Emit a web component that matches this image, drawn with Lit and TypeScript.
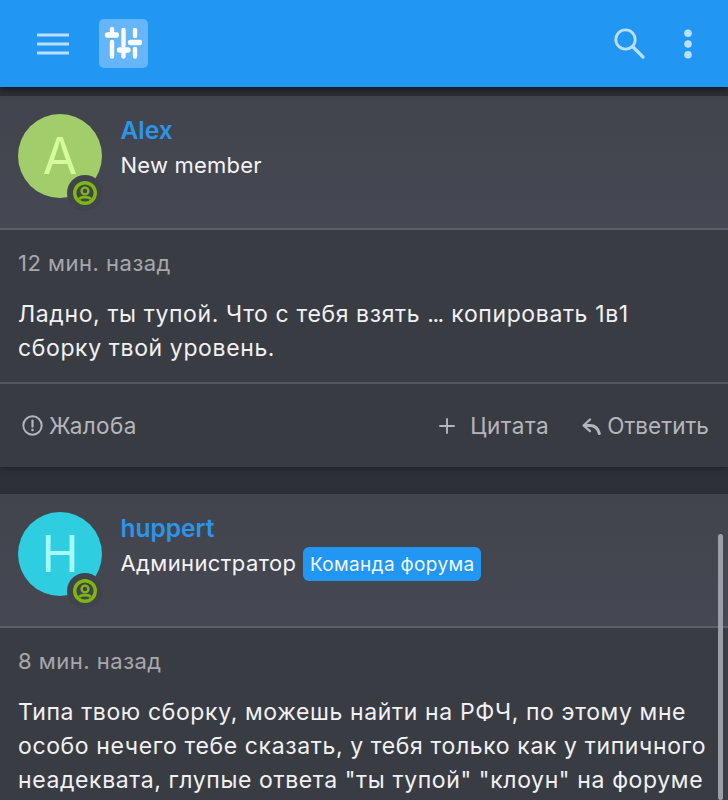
import { LitElement, html, css, svg } from "lit";
import { customElement } from "lit/decorators.js";

const statusIcon = svg`<svg viewBox="0 0 24 24" width="24" height="24" aria-hidden="true">
  <circle cx="12" cy="12" r="10.300" fill="none" stroke="#7fb60f" stroke-width="3.400"/>
  <circle cx="12" cy="10" r="3.400" fill="none" stroke="#7fb60f" stroke-width="2.400"/>
  <path d="M6.200 18c2-2.600 9.600-2.600 11.600 0" fill="none" stroke="#7fb60f" stroke-width="2.800"/>
</svg>`;

@customElement("forum-post")
class ForumPost extends LitElement {
  static properties = {
    initial: {},
    name: {},
    role: {},
    badge: {},
    time: {},
    lines: { type: Array },
    bg: {},
    fg: {},
    actions: { type: Boolean },
    latinRole: { type: Boolean },
  };
  declare initial: string;
  declare name: string;
  declare role: string;
  declare badge: string;
  declare time: string;
  declare lines: unknown[];
  declare bg: string;
  declare fg: string;
  declare actions: boolean;
  declare latinRole: boolean;

  static styles = css`
    :host { display: block; font-family: Inter, "Noto Sans", sans-serif; }
    .card { background: #393b43; box-shadow: 0 2px 6px rgba(0,0,0,.28); }
    .head {
      display: flex; gap: 18.500px; height: 134px; box-sizing: border-box;
      padding: 18px 18px 0; background: linear-gradient(#42444d, #454852);
      border-bottom: 2px solid #5d5f68;
    }
    .avatar-wrap { position: relative; width: 84px; height: 84px; flex: none; }
    .avatar {
      width: 84px; height: 84px; border-radius: 50%;
      display: flex; align-items: center; justify-content: center;
      font-size: 50px; font-weight: 400; line-height: 1;
    }
    .status {
      position: absolute; left: 49px; top: 61px; width: 36px; height: 36px;
      border-radius: 50%; background: #42444d;
      display: flex; align-items: center; justify-content: center;
    }
    .name { color: #2b95ea; font-size: 24.500px; font-weight: 600; line-height: 30px; margin-top: 1px; }
    .role-row { display: flex; align-items: center; gap: 7px; margin-top: 3px; height: 34px; }
    .role { color: #f4f4f6; font-size: 22px; letter-spacing: .4px; }
    .role.latin { letter-spacing: .2px; }
    .badge {
      background: #2196f3; color: #f2f8fe; font-size: 19px; border-radius: 6px;
      height: 34px; padding: 0 6.500px; display: flex; align-items: center;
      letter-spacing: .35px; margin-top: 2px;
    }
    .body { padding: 20px 18px 0; background: #3a3c44; }
    .time { color: #a7a8ae; font-size: 22px; letter-spacing: .5px; line-height: 26px; }
    .text { color: #f1f1f3; font-size: 23px; letter-spacing: .62px; line-height: 34px; margin-top: 21px; padding-bottom: 17px; white-space: nowrap; }
    .dots { letter-spacing: -1.500px; margin-right: 1.500px; }
    .actions {
      display: flex; align-items: center; height: 85px; box-sizing: border-box;
      border-top: 2px solid #55575f; padding: 0 19px 0 21px;
      color: #b5b6bc; font-size: 22.500px; letter-spacing: .4px;
    }
    .act { display: flex; align-items: center; }
    .spacer { flex: 1; }
    .gap-alert { gap: 5px; }
    .gap-reply { gap: 6px; letter-spacing: .05px; }
    .gap-plus { gap: 15px; margin-right: 32px; letter-spacing: .55px; }
  `;

  render() {
    return html`<article class="card">
      <div class="head">
        <div class="avatar-wrap">
          <div class="avatar" style="background:${this.bg};color:${this.fg}">${this.initial}</div>
          <div class="status">${statusIcon}</div>
        </div>
        <div>
          <div class="name">${this.name}</div>
          <div class="role-row">
            <span class="role ${this.latinRole ? "latin" : ""}">${this.role}</span>
            ${this.badge ? html`<span class="badge">${this.badge}</span>` : ""}
          </div>
        </div>
      </div>
      <div class="body">
        <div class="time">${this.time}</div>
        <div class="text">${this.lines.map((l) => html`<div>${l}</div>`)}</div>
      </div>
      ${this.actions
        ? html`<div class="actions">
            <span class="act gap-alert">
              <svg width="23" height="23" viewBox="0 0 23 23" aria-hidden="true">
                <circle cx="11.500" cy="11.500" r="9.200" fill="none" stroke="#b5b6bc" stroke-width="1.900"/>
                <path d="M11.500 6.500v6.200" stroke="#b5b6bc" stroke-width="2.200" stroke-linecap="round"/>
                <circle cx="11.500" cy="16" r="1.300" fill="#b5b6bc"/>
              </svg>Жалоба</span>
            <span class="spacer"></span>
            <span class="act gap-plus">
              <svg width="16" height="16" viewBox="0 0 16 16" aria-hidden="true">
                <path d="M8 1v14M1 8h14" stroke="#b5b6bc" stroke-width="1.900" stroke-linecap="round"/>
              </svg>Цитата</span>
            <span class="act gap-reply">
              <svg width="20" height="18" viewBox="581 416 20 18" aria-hidden="true">
                <path d="M590 418.500 583.500 424.500 590 430.200" fill="none" stroke="#b5b6bc" stroke-width="2.200" stroke-linejoin="round" stroke-linecap="round"/>
                <path d="M585 424.500h5c4.500 0 8 3 9.300 8" fill="none" stroke="#b5b6bc" stroke-width="3" stroke-linecap="round"/>
              </svg>Ответить</span>
          </div>`
        : ""}
    </article>`;
  }
}

@customElement("app-root")
export class AppRoot extends LitElement {
  static styles = css`
    :host {
      display: block; position: relative; height: 800px; overflow: hidden;
      background: #2e3037; font-family: Inter, "Noto Sans", sans-serif;
    }
    .bar {
      height: 87px; background: #2196f3; display: flex; align-items: center;
      padding: 0 35px 0 37px; box-shadow: 0 3px 6px rgba(0,0,0,.5);
      position: relative; z-index: 1;
    }
    .logo { width: 49px; height: 49px; margin-left: 30px; display: block; }
    .grow { flex: 1; }
    .search { margin-right: 37px; }
    .list { display: flex; flex-direction: column; gap: 27px; padding-top: 9px; }
    .scroll {
      position: absolute; right: 5px; top: 534px; width: 5px; height: 266px;
      border-radius: 3px; background: #9c9da6;
    }
  `;

  render() {
    return html`
      <header class="bar">
        <svg width="32" height="22" viewBox="0 0 32 22" aria-hidden="true">
          <path d="M0 2h32M0 11h32M0 20h32" stroke="#bbdefb" stroke-width="3.200"/>
        </svg>
        <svg class="logo" viewBox="99 19 49 49" aria-hidden="true">
          <rect x="99" y="19" width="49" height="49" rx="5" fill="#64b5f9"/>
          <g fill="none" stroke="#fff" stroke-linecap="round">
            <path d="M112 29v5M112 42v14.500M123.500 30v15.500M123.500 53v3.500M135 30v6M135 49v7.500" stroke-width="4.400"/>
            <path d="M107.500 35h9M119.500 50h8.500M130.500 42.500h9" stroke-width="5.400"/>
          </g>
        </svg>
        <span class="grow"></span>
        <svg class="search" width="32" height="32" viewBox="0 0 32 32" aria-hidden="true">
          <circle cx="11.500" cy="11.500" r="9.700" fill="none" stroke="#bbdefb" stroke-width="2.800"/>
          <path d="M19 19 29 29" stroke="#bbdefb" stroke-width="3.200" stroke-linecap="round"/>
        </svg>
        <svg width="10" height="30" viewBox="0 0 10 30" aria-hidden="true">
          <circle cx="5" cy="4.300" r="3.800" fill="#bbdefb"/>
          <circle cx="5" cy="15" r="3.800" fill="#bbdefb"/>
          <circle cx="5" cy="25.700" r="3.800" fill="#bbdefb"/>
        </svg>
      </header>
      <div class="list">
        <forum-post initial="A" name="Alex" role="New member" latinRole time="12 мин. назад"
          bg="#a1ce6a" fg="#d4fb9c" actions
          .lines=${[html`Ладно, ты тупой. Что с тебя взять <span class="dots">...</span> копировать 1в1`, "сборку твой уровень."]}></forum-post>
        <forum-post initial="H" name="huppert" role="Администратор" badge="Команда форума" time="8 мин. назад"
          bg="#2fcde0" fg="#a6f8fd"
          .lines=${["Типа твою сборку, можешь найти на РФЧ, по этому мне", "особо нечего тебе сказать, у тебя только как у типичного", "неадеквата, глупые ответа \"ты тупой\" \"клоун\" на форуме"]}></forum-post>
      </div>
      <div class="scroll"></div>
    `;
  }
}
